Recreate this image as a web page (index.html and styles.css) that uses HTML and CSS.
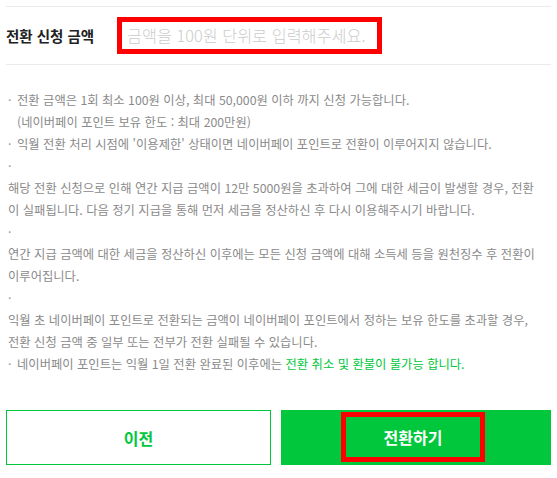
FILE: index.html
```html
<!DOCTYPE html>
<html lang="ko">
<head>
<meta charset="utf-8">
<link rel="stylesheet" href="styles.css">
</head>
<body>
<div class="page">
  <div class="field-row">
    <span class="field-label">전환 신청 금액</span>
    <input class="amount-input" type="text" placeholder="금액을 100원 단위로 입력해주세요.">
  </div>
  <ul class="notes">
    <li class="dot">전환 금액은 1회 최소 100원 이상, 최대 50,000원 이하 까지 신청 가능합니다.<br>(네이버페이 포인트 보유 한도 : 최대 200만원)</li>
    <li class="dot">익월 전환 처리 시점에 '이용제한' 상태이면 네이버페이 포인트로 전환이 이루어지지 않습니다.</li>
    <li class="dot empty"></li>
    <li class="plain">해당 전환 신청으로 인해 연간 지급 금액이 12만 5000원을 초과하여 그에 대한 세금이 발생할 경우, 전환<br>이 실패됩니다. 다음 정기 지급을 통해 먼저 세금을 정산하신 후 다시 이용해주시기 바랍니다.</li>
    <li class="dot empty"></li>
    <li class="plain">연간 지급 금액에 대한 세금을 정산하신 이후에는 모든 신청 금액에 대해 소득세 등을 원천징수 후 전환이<br>이루어집니다.</li>
    <li class="dot empty"></li>
    <li class="plain">익월 초 네이버페이 포인트로 전환되는 금액이 네이버페이 포인트에서 정하는 보유 한도를 초과할 경우,<br>전환 신청 금액 중 일부 또는 전부가 전환 실패될 수 있습니다.</li>
    <li class="dot">네이버페이 포인트는 익월 1일 전환 완료된 이후에는 <span class="green">전환 취소 및 환불이 불가능 합니다.</span></li>
  </ul>
  <div class="actions">
    <button class="btn btn-prev" type="button">이전</button>
    <button class="btn btn-submit" type="button"><span class="submit-label">전환하기</span></button>
  </div>
</div>
</body>
</html>
```
FILE: styles.css
```css
* { box-sizing: border-box; }
html, body { margin: 0; padding: 0; background: #fff; }
body {
  font-family: "Noto Sans CJK KR", "Noto Sans", sans-serif;
  color: #888;
}
.page {
  width: 557px;
  padding: 6px 6px 0 6px;
}
.field-row {
  display: flex;
  align-items: center;
  height: 59px;
  border-top: 1px solid #ebebeb;
  border-bottom: 1px solid #ebebeb;
}
.field-label {
  width: 111px;
  font-size: 14.5px;
  font-weight: 700;
  color: #222;
  white-space: nowrap;
}
.amount-input {
  width: 265px;
  height: 37px;
  border: 5px solid #ff0000;
  padding: 0 0 0 5px;
  font-family: "Noto Sans CJK KR", "Noto Sans", sans-serif;
  font-size: 16.3px;
  font-weight: 300;
  color: #333;
  outline: none;
  margin-top: -1px;
}
.amount-input::placeholder { color: #cccccc; }
.notes {
  list-style: none;
  margin: 0;
  padding: 24px 0 0 2px;
  font-size: 12.3px;
  line-height: 22px;
  color: #8a8a8a;
  white-space: nowrap;
}
.notes li { margin: 0; }
.dot {
  position: relative;
  padding-left: 9px;
}
.dot::before {
  content: "·";
  position: absolute;
  left: 0;
  top: 0;
  color: #999;
}
.dot.empty { height: 22px; }
.plain { padding-left: 0; }
.green { color: #00c73c; }
.actions {
  display: grid;
  grid-template-columns: 265px 1fr;
  gap: 10px;
  margin-top: 35px;
}
.btn {
  height: 55px;
  font-family: "Noto Sans CJK KR", "Noto Sans", sans-serif;
  font-size: 16px;
  font-weight: 700;
  display: flex;
  align-items: center;
  justify-content: center;
  cursor: pointer;
}
.btn-prev {
  background: #fff;
  border: 1px solid #00c73c;
  color: #00c73c;
}
.btn-submit {
  background: #00c73c;
  border: 0;
  color: #fff;
  padding: 0 6px 2px 0;
}
.submit-label {
  display: flex;
  align-items: center;
  justify-content: center;
  width: 144px;
  height: 50px;
  border: 5px solid #ff0000;
}
```
